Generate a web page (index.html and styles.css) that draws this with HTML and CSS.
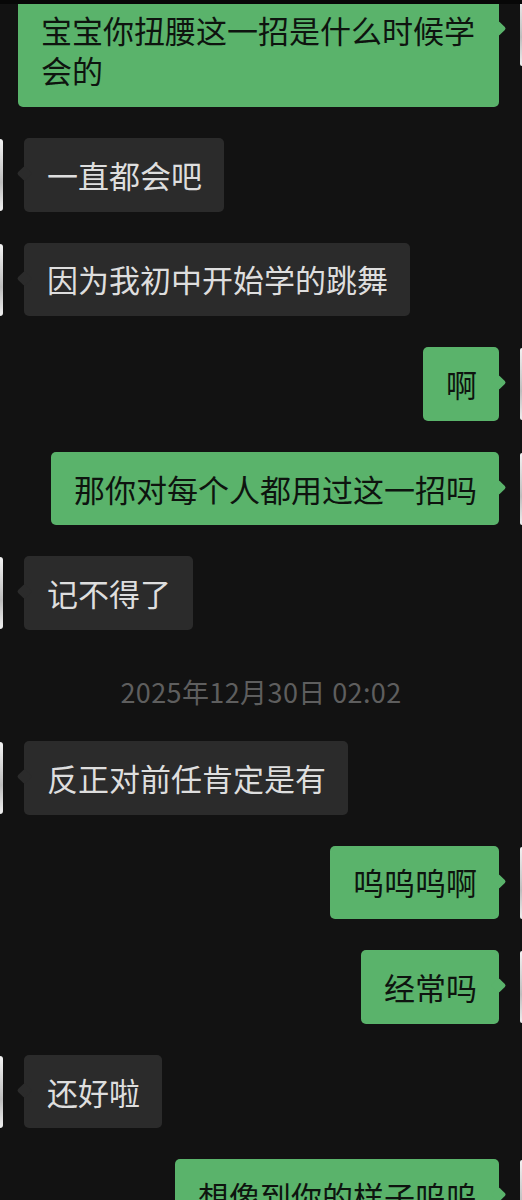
FILE: index.html
```html
<!DOCTYPE html>
<html lang="zh-CN">
<head>
    <meta charset="UTF-8">
    <meta name="viewport" content="width=device-width, initial-scale=1.0">
    <title>聊天记录</title>
    <link rel="stylesheet" href="styles.css">
</head>
<body>
    <div class="screen">
        <div class="chat">
            <div class="row sent">
                <div class="bubble">宝宝你扭腰这一招是什么时候学会的</div>
                <div class="avatar"></div>
            </div>

            <div class="row received">
                <div class="avatar"></div>
                <div class="bubble">一直都会吧</div>
            </div>

            <div class="row received">
                <div class="avatar"></div>
                <div class="bubble">因为我初中开始学的跳舞</div>
            </div>

            <div class="row sent">
                <div class="bubble">啊</div>
                <div class="avatar"></div>
            </div>

            <div class="row sent">
                <div class="bubble">那你对每个人都用过这一招吗</div>
                <div class="avatar"></div>
            </div>

            <div class="row received">
                <div class="avatar"></div>
                <div class="bubble">记不得了</div>
            </div>

            <div class="time">2025年12月30日 02:02</div>

            <div class="row received">
                <div class="avatar"></div>
                <div class="bubble">反正对前任肯定是有</div>
            </div>

            <div class="row sent">
                <div class="bubble">呜呜呜啊</div>
                <div class="avatar"></div>
            </div>

            <div class="row sent">
                <div class="bubble">经常吗</div>
                <div class="avatar"></div>
            </div>

            <div class="row received">
                <div class="avatar"></div>
                <div class="bubble">还好啦</div>
            </div>

            <div class="row sent">
                <div class="bubble">想像到你的样子呜呜</div>
                <div class="avatar"></div>
            </div>
        </div>
    </div>
</body>
</html>
```

FILE: styles.css
```css
:root {
    --bg: #121212;
    --edge: #070707;
    --green: #5ab36b;
    --green-text: #0e140f;
    --gray-bubble: #2b2b2b;
    --gray-text: #dedede;
    --time: #5e5e5e;
}

* {
    box-sizing: border-box;
}

body {
    margin: 0;
    padding: 0;
    background: var(--bg);
    font-family: "Noto Sans CJK SC", "Noto Sans", sans-serif;
}

.screen {
    height: 100vh;
    overflow: hidden;
    border-top: 4px solid var(--edge);
}

.chat {
    display: flex;
    flex-direction: column;
    gap: 31px;
    margin-top: -10.6px;
}

.row {
    display: flex;
    align-items: flex-start;
    gap: 21px;
}

.row.sent {
    justify-content: flex-end;
}

/* avatars are almost entirely off the crop, only a sliver shows */
.avatar {
    flex: none;
    width: 3px;
    height: 72px;
    margin-top: 1px;
    background: linear-gradient(#f2f2f2, #cfcfcf 40%, #bdbdbd 60%, #efefef);
}

.received .avatar {
    border-radius: 0 4px 4px 0;
}

.sent .avatar {
    width: 2px;
    border-radius: 4px 0 0 4px;
}

.bubble {
    position: relative;
    max-width: 481px;
    padding: 16.8px 22px 16.8px 23px;
    border-radius: 5px;
    font-size: 31px;
    line-height: 40px;
}

.bubble::after {
    content: '';
    position: absolute;
    top: 30px;
    width: 11px;
    height: 11px;
    border-radius: 2px;
    transform: rotate(45deg);
}

.sent .bubble {
    background: var(--green);
    color: var(--green-text);
}

.sent .bubble::after {
    right: -5px;
    background: var(--green);
}

.received .bubble {
    background: var(--gray-bubble);
    color: var(--gray-text);
}

.received .bubble::after {
    left: -5px;
    background: var(--gray-bubble);
}

.time {
    margin-top: 13px;
    text-align: center;
    color: var(--time);
    font-size: 27px;
    letter-spacing: 0.4px;
    line-height: 36px;
}
```
